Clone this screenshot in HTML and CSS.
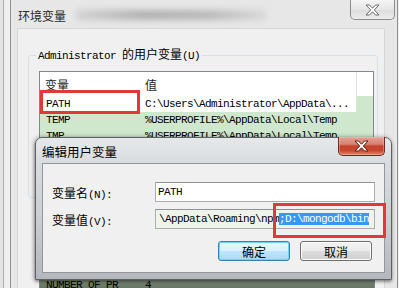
FILE: index.html
```html
<!DOCTYPE html>
<html>
<head>
<title>环境变量</title>
<link rel="stylesheet" href="styles.css">
</head>
<body>

<div class="win win-outer">
	<div class="titlebar">
		<span class="title">环境变量</span>
		<span class="blur"></span>
		<div class="close close-idle">
			<svg width="15" height="12" viewBox="0 0 15 12"><path d="M1 1h3.5l3 3.2 3-3.2H14L9.3 6 14 11h-3.5l-3-3.2-3 3.2H1l4.7-5z" fill="#fff" stroke="#6a6a6a" stroke-width="1"/></svg>
		</div>
	</div>

	<div class="client">
		<fieldset class="group">
			<legend><span class="m">Administrator </span>的用户变量<span class="m">(U)</span></legend>
			<div class="listview">
				<div class="lv-head">
					<span class="c1">变量</span>
					<span class="c2">值</span>
					<span class="c3"></span>
				</div>
				<div class="lv-row row-white">
					<span class="c1">PATH</span>
					<span class="c2">C:\Users\Administrator\AppData\...</span>
					<span class="c3"></span>
				</div>
				<div class="lv-row">
					<span class="c1">TEMP</span>
					<span class="c2">%USERPROFILE%\AppData\Local\Temp</span>
				</div>
				<div class="lv-row">
					<span class="c1">TMP</span>
					<span class="c2">%USERPROFILE%\AppData\Local\Temp</span>
				</div>
				<div class="mark mark-path"></div>
			</div>
		</fieldset>

		<div class="sys-list">
			<div class="lv-row row-dark">
				<span class="c1">NUMBER_OF_PR</span>
				<span class="c2">4</span>
			</div>
		</div>
	</div>
</div><!-- end outer window -->


<div class="win win-edit">
	<div class="titlebar">
		<span class="title">编辑用户变量</span>
		<div class="close close-red">
			<svg width="15" height="12" viewBox="0 0 15 12"><path d="M1 1h3.5l3 3.2 3-3.2H14L9.3 6 14 11h-3.5l-3-3.2-3 3.2H1l4.7-5z" fill="#fff" stroke="#5b1d14" stroke-width="1"/></svg>
		</div>
	</div>

	<div class="client">
		<div class="form">
			<label>变量名<span class="m">(N):</span></label>
			<div class="field">PATH</div>
			<label>变量值<span class="m">(V):</span></label>
			<div class="field field-value">\AppData\Roaming\npm<span class="sel">;D:\mongodb\bin</span></div>
		</div>
		<div class="buttons">
			<button class="btn btn-default">确定</button>
			<button class="btn">取消</button>
		</div>
	</div>

	<div class="mark mark-value"></div>
</div><!-- end edit dialog -->

</body>
</html>
```

FILE: styles.css
```css
* {
	margin: 0;
	padding: 0;
	box-sizing: border-box;
}

html, body {
	width: 399px;
	height: 288px;
	overflow: hidden;
}

body {
	position: relative;
	font: 12px "Noto Sans CJK SC", sans-serif;
	color: #000;
	background: linear-gradient(90deg, #e4e4e4 0, #e4e4e4 3px, #a9a9a9 3px, #a9a9a9 4px, #eeeeee 4px);
}

/* monospace latin, like SimSun half-width */
.m {
	font-family: "Liberation Mono", monospace;
	font-size: 11px;
	letter-spacing: -0.6px;
}

/* ---------- windows ---------- */

.win {
	position: absolute;
}

.titlebar {
	display: flex;
	align-items: center;
	position: relative;
}

.close {
	position: absolute;
	display: flex;
	align-items: center;
	justify-content: center;
	border-radius: 0 0 5px 5px;
}

.mark {
	position: absolute;
	border: 3px solid #e3373b;
}

/* outer: 环境变量 */

.win-outer {
	left: 10px;
	top: 0;
	width: 388px;
	height: 300px;
	background: #e7e7e7;
	border: 1px solid #8e8e8e;
	border-top: none;
}

.win-outer .titlebar {
	height: 28px;
	padding: 2px 0 0 7px;
}

.win-outer .title {
	color: #2a2a2a;
}

.blur {
	width: 190px;
	height: 10px;
	margin-left: 10px;
	background: linear-gradient(90deg, #c4c4c4, #8d8d8d 35%, #9a9a9a 70%, #d0d0d0);
	filter: blur(3px);
	opacity: 0.6;
}

.close-idle {
	top: 0;
	right: 2px;
	width: 45px;
	height: 20px;
	border: 1px solid #8d8d8d;
	border-top: none;
	background: linear-gradient(#f5f5f5, #e6e6e6 50%, #dcdcdc 51%, #ececec);
}

.win-outer .client {
	margin-left: 6px;
	width: 368px;
	height: 272px;
	background: #f0f0f0;
	border: 1px solid #d6d6d6;
}

.group {
	margin: 18px 6px 0 10px;
	padding: 8px 3px 10px 10px;
	border: 1px solid #d5dfe5;
	border-radius: 3px;
}

.group legend {
	line-height: 14px;
	padding: 0 2px;
	margin-left: -3px;
}

.listview {
	position: relative;
	height: 116px;
	border: 1px solid #828790;
	background: #cfe7cc;
}

.lv-head {
	display: flex;
	align-items: center;
	height: 24px;
	background: #fff;
	color: #1e1e1e;
}

.lv-head .c3 {
	flex: 1;
	align-self: stretch;
	border-left: 1px solid #e3e3e3;
}

.c1 {
	width: 100px;
	padding-left: 5px;
	white-space: nowrap;
	overflow: hidden;
}

.c2 {
	width: 216px;
	padding-left: 5px;
	white-space: nowrap;
	overflow: hidden;
}

.lv-row {
	display: flex;
	align-items: center;
	height: 16px;
	font-family: "Liberation Mono", monospace;
	font-size: 11px;
	letter-spacing: -0.6px;
	line-height: 16px;
}

.lv-row .c1 {
	padding-left: 6px;
}

.row-white .c1,
.row-white .c2 {
	background: #fff;
}

.mark-path {
	left: 0;
	top: 18px;
	width: 100px;
	height: 24px;
}

.sys-list {
	margin: 68px 9px 0 21px;
	border: 1px solid #828790;
	border-bottom: none;
}

.row-dark {
	height: 24px;
	align-items: flex-end;
	background: linear-gradient(#9aa797, #5f6d5c);
	line-height: 12px;
}

/* inner: 编辑用户变量 */

.win-edit {
	left: 35px;
	top: 137px;
	width: 357px;
	height: 143px;
	padding: 0 6px 6px;
	border: 1px solid #5c6167;
	border-radius: 7px 7px 0 0;
	background: linear-gradient(#e6e8ea 0, #d9dcdf 18%, #c9cdd1 60%, #b4b8bc 100%);
	box-shadow: -1px 0 4px rgba(0, 0, 0, 0.35), 0 2px 3px rgba(0, 0, 0, 0.3);
}

.win-edit .titlebar {
	height: 25px;
	padding-top: 1px;
}

.win-edit .title {
	font-size: 12.5px;
}

.close-red {
	top: -1px;
	right: 0;
	width: 47px;
	height: 19px;
	border: 1px solid #6e2a1f;
	border-top: none;
	background: linear-gradient(#e3a397 0, #d9806f 40%, #c3432d 50%, #c9472f 75%, #e0876c 100%);
	box-shadow: inset 0 0 0 1px rgba(255, 210, 200, 0.35);
}

.win-edit .client {
	height: 110px;
	padding: 18px 12px 0 9px;
	background: #f0f0f0;
	border: 1px solid #8f969e;
}

.form {
	display: grid;
	grid-template-columns: 103px 220px;
	grid-auto-rows: 20px;
	row-gap: 7px;
	align-items: center;
}

.field {
	height: 20px;
	padding-left: 2px;
	border: 1px solid #abadb3;
	border-top-color: #8f9196;
	background: #fff;
	font-family: "Liberation Mono", monospace;
	font-size: 11px;
	letter-spacing: -0.6px;
	line-height: 18px;
	white-space: nowrap;
	overflow: hidden;
}

.field-value {
	padding-left: 3px;
	background: #eef4ea;
}

.field .sel {
	background: #3399ff;
	color: #fff;
}

.buttons {
	display: flex;
	justify-content: flex-end;
	gap: 10px;
	margin-top: 12px;
}

.btn {
	width: 72px;
	height: 20px;
	font: 12px "Noto Sans CJK SC", sans-serif;
	color: #000;
	border: 1px solid #707070;
	border-radius: 3px;
	background: linear-gradient(#f2f2f2, #ebebeb 50%, #dddddd 51%, #cfcfcf);
	box-shadow: inset 0 0 0 1px #fbfbfb;
}

.btn-default {
	border-color: #3c7fb1;
	background: linear-gradient(#eaf6fd, #d9f0fc 50%, #bee6fd 51%, #a7d9f5);
	box-shadow: inset 0 0 0 1px #6cd4f6;
}

.mark-value {
	left: 237px;
	top: 65px;
	width: 113px;
	height: 35px;
}
```
